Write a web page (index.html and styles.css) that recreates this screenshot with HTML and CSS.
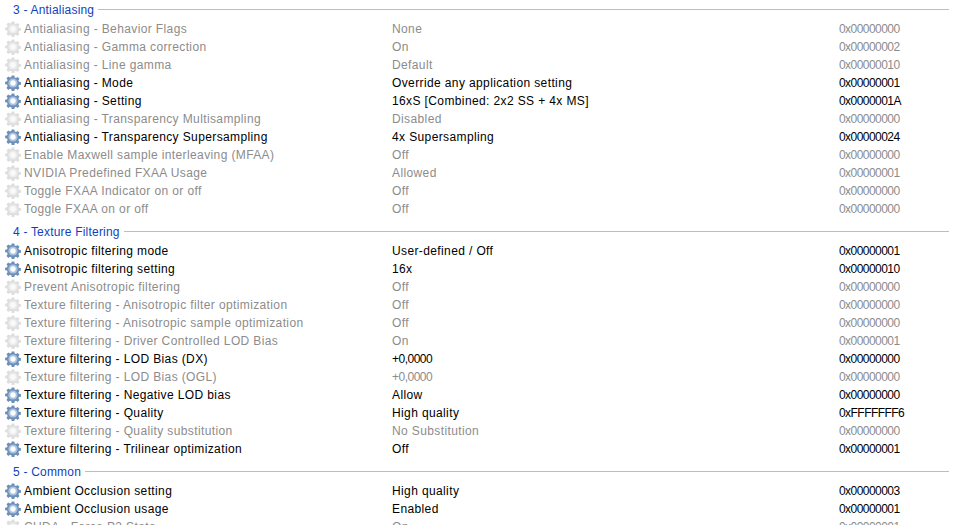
FILE: index.html
```html
<!DOCTYPE html>
<html lang="en">
<head>
<meta charset="utf-8">
<title>Profile settings</title>
<link rel="stylesheet" href="styles.css">
</head>
<body>
<svg class="defs" width="0" height="0" aria-hidden="true">
  <symbol id="gear" viewBox="0 0 16 16">
    <path class="gear-body" d="M6.7 0.5h2.6l.4 2 1.3.5 1.7-1.1 1.8 1.8-1.1 1.7.5 1.3 2 .4v2.6l-2 .4-.5 1.3 1.1 1.7-1.8 1.8-1.7-1.1-1.3.5-.4 2H6.7l-.4-2-1.3-.5-1.7 1.1-1.8-1.8L2.6 10.9l-.5-1.3-2-.4V6.7l2-.4.5-1.3-1.1-1.7 1.8-1.8L5 2.6l1.3-.5z"/>
    <circle class="gear-ring" cx="8" cy="8" r="4.6"/>
    <circle class="gear-hole" cx="8" cy="8" r="2.7"/>
  </symbol>
</svg>
<main class="list">
  <section class="group">
    <h2 class="group-title"><span>3 - Antialiasing</span></h2>
    <div class="row off"><svg class="icon"><use href="#gear"/></svg><span>Antialiasing - Behavior Flags</span><span>None</span><span class="hex">0x00000000</span></div>
    <div class="row off"><svg class="icon"><use href="#gear"/></svg><span>Antialiasing - Gamma correction</span><span>On</span><span class="hex">0x00000002</span></div>
    <div class="row off"><svg class="icon"><use href="#gear"/></svg><span>Antialiasing - Line gamma</span><span>Default</span><span class="hex">0x00000010</span></div>
    <div class="row"><svg class="icon"><use href="#gear"/></svg><span>Antialiasing - Mode</span><span>Override any application setting</span><span class="hex">0x00000001</span></div>
    <div class="row"><svg class="icon"><use href="#gear"/></svg><span>Antialiasing - Setting</span><span>16xS [Combined: 2x2 SS + 4x MS]</span><span class="hex">0x0000001A</span></div>
    <div class="row off"><svg class="icon"><use href="#gear"/></svg><span>Antialiasing - Transparency Multisampling</span><span>Disabled</span><span class="hex">0x00000000</span></div>
    <div class="row"><svg class="icon"><use href="#gear"/></svg><span>Antialiasing - Transparency Supersampling</span><span>4x Supersampling</span><span class="hex">0x00000024</span></div>
    <div class="row off"><svg class="icon"><use href="#gear"/></svg><span>Enable Maxwell sample interleaving (MFAA)</span><span>Off</span><span class="hex">0x00000000</span></div>
    <div class="row off"><svg class="icon"><use href="#gear"/></svg><span>NVIDIA Predefined FXAA Usage</span><span>Allowed</span><span class="hex">0x00000001</span></div>
    <div class="row off"><svg class="icon"><use href="#gear"/></svg><span>Toggle FXAA Indicator on or off</span><span>Off</span><span class="hex">0x00000000</span></div>
    <div class="row off"><svg class="icon"><use href="#gear"/></svg><span>Toggle FXAA on or off</span><span>Off</span><span class="hex">0x00000000</span></div>
  </section>
  <section class="group">
    <h2 class="group-title"><span>4 - Texture Filtering</span></h2>
    <div class="row"><svg class="icon"><use href="#gear"/></svg><span>Anisotropic filtering mode</span><span>User-defined / Off</span><span class="hex">0x00000001</span></div>
    <div class="row"><svg class="icon"><use href="#gear"/></svg><span>Anisotropic filtering setting</span><span>16x</span><span class="hex">0x00000010</span></div>
    <div class="row off"><svg class="icon"><use href="#gear"/></svg><span>Prevent Anisotropic filtering</span><span>Off</span><span class="hex">0x00000000</span></div>
    <div class="row off"><svg class="icon"><use href="#gear"/></svg><span>Texture filtering - Anisotropic filter optimization</span><span>Off</span><span class="hex">0x00000000</span></div>
    <div class="row off"><svg class="icon"><use href="#gear"/></svg><span>Texture filtering - Anisotropic sample optimization</span><span>Off</span><span class="hex">0x00000000</span></div>
    <div class="row off"><svg class="icon"><use href="#gear"/></svg><span>Texture filtering - Driver Controlled LOD Bias</span><span>On</span><span class="hex">0x00000001</span></div>
    <div class="row"><svg class="icon"><use href="#gear"/></svg><span>Texture filtering - LOD Bias (DX)</span><span class="num">+0,0000</span><span class="hex">0x00000000</span></div>
    <div class="row off"><svg class="icon"><use href="#gear"/></svg><span>Texture filtering - LOD Bias (OGL)</span><span class="num">+0,0000</span><span class="hex">0x00000000</span></div>
    <div class="row"><svg class="icon"><use href="#gear"/></svg><span>Texture filtering - Negative LOD bias</span><span>Allow</span><span class="hex">0x00000000</span></div>
    <div class="row"><svg class="icon"><use href="#gear"/></svg><span>Texture filtering - Quality</span><span>High quality</span><span class="hex">0xFFFFFFF6</span></div>
    <div class="row off"><svg class="icon"><use href="#gear"/></svg><span>Texture filtering - Quality substitution</span><span>No Substitution</span><span class="hex">0x00000000</span></div>
    <div class="row"><svg class="icon"><use href="#gear"/></svg><span>Texture filtering - Trilinear optimization</span><span>Off</span><span class="hex">0x00000001</span></div>
  </section>
  <section class="group">
    <h2 class="group-title"><span>5 - Common</span></h2>
    <div class="row"><svg class="icon"><use href="#gear"/></svg><span>Ambient Occlusion setting</span><span>High quality</span><span class="hex">0x00000003</span></div>
    <div class="row"><svg class="icon"><use href="#gear"/></svg><span>Ambient Occlusion usage</span><span>Enabled</span><span class="hex">0x00000001</span></div>
    <div class="row off"><svg class="icon"><use href="#gear"/></svg><span>CUDA - Force P2 State</span><span>On</span><span class="hex">0x00000001</span></div>
  </section>
</main>
</body>
</html>
```
FILE: styles.css
```css
html, body {
  margin: 0;
  height: 100%;
  overflow: hidden;
  background: #fff;
}
.defs { position: absolute; }
.list {
  font: 12px/18px "Liberation Sans", Arial, sans-serif;
  letter-spacing: 0.38px;
  color: #000;
  --gear-body: #6d8fb8;
  --gear-ring: #a9c4e0;
  --gear-hole: #fff;
}
.group + .group { margin-top: 5px; }
.group-title {
  display: flex;
  align-items: center;
  gap: 4px;
  height: 19px;
  margin: 0 7px 0 13px;
  font: inherit;
  letter-spacing: 0.2px;
  color: #0f3fc0;
}
.group-title::after {
  content: "";
  flex: 1;
  height: 1px;
  background: #b4bcd8;
}
.row {
  display: grid;
  grid-template-columns: 16px 371px 447px 1fr;
  align-items: center;
  height: 18px;
  padding-left: 5px;
  white-space: nowrap;
}
.row > span { padding-top: 1px; }
.row > span:nth-child(2) { padding-left: 3px; }
.hex { letter-spacing: -0.55px; }
.num { letter-spacing: -0.5px; }
.icon { width: 16px; height: 16px; }
.off {
  color: #8c8c8c;
  --gear-body: #dedede;
  --gear-ring: #ebebeb;
  --gear-hole: #fafafa;
}
.gear-body { fill: var(--gear-body); }
.gear-ring { fill: var(--gear-ring); }
.gear-hole { fill: var(--gear-hole); }
```
